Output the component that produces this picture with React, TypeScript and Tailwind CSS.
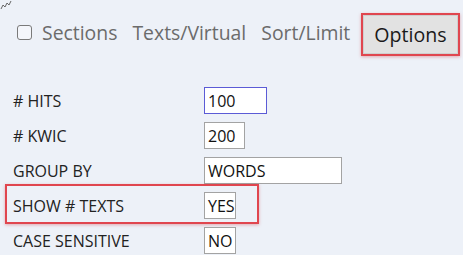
import React from 'react';

type Row = { label: string; value: string; width: string; focus?: boolean; marked?: boolean };

const rows: Row[] = [
  { label: '# HITS', value: '100', width: 'w-[63px]', focus: true },
  { label: '# KWIC', value: '200', width: 'w-[41px]' },
  { label: 'GROUP BY', value: 'WORDS', width: 'w-[138px]' },
  { label: 'SHOW # TEXTS', value: 'YES', width: 'w-[32px]', marked: true },
  { label: 'CASE SENSITIVE', value: 'NO', width: 'w-[32px]' },
];

export default function App() {
  return (
    <div
      className="relative w-[463px] h-[255px] overflow-hidden bg-[#edf1f8] text-[#222]"
      style={{ fontFamily: '"Open Sans", "Noto Sans", sans-serif' }}
    >
      {/* stray cursor mark in the corner */}
      <svg className="absolute left-0 top-0" width="12" height="10" viewBox="0 0 12 10">
        <polyline points="1,9 3,5 5,7 7,3 9,5 11,1" fill="none" stroke="#666" strokeWidth="1" />
      </svg>

      <div className="flex items-center pt-[13px] pl-[17px] h-[43px] box-content">
        <div className="flex items-center mb-[4px]">
          <span className="shrink-0 w-[15px] h-[15px] rounded-[3px] border border-[#7a7a7a] bg-white/40" />
          <span className="ml-[10px] text-[19.4px] leading-none text-[#6b6b6b]">Sections</span>
          <span className="ml-[15px] text-[19.4px] leading-none text-[#6b6b6b]">Texts/Virtual</span>
          <span className="ml-[15px] text-[19.4px] leading-none text-[#6b6b6b]">Sort/Limit</span>
        </div>
        <div className="ml-[11px] h-[43px] border-2 border-[#e0464f] shadow-[0_1px_3px_rgba(200,40,50,0.35)]">
          <div className="h-full px-[10px] flex items-center bg-[#e2e2e2] border border-[#cfcfcf] text-[19.6px] leading-none text-[#1a1a1a]">
            Options
          </div>
        </div>
      </div>

      <div className="mt-[31px] pl-[13px] flex flex-col gap-[8px]">
        {rows.map((r) => (
          <div key={r.label} className="relative flex items-center h-[27px]">
            {r.marked && (
              <div className="absolute -left-[8px] -top-[8px] w-[254px] h-[40px] border-2 border-[#e0464f] shadow-[0_1px_3px_rgba(200,40,50,0.35)]" />
            )}
            <span className="w-[191px] text-[16px] leading-none">{r.label}</span>
            <div
              className={`${r.width} h-[27px] bg-white flex items-center pl-[3px] text-[16px] leading-none text-[#111] ${
                r.focus ? 'border-[1.5px] border-[#5b5bd6]' : 'border border-[#a3a3a3]'
              }`}
            >
              {r.value}
            </div>
          </div>
        ))}
      </div>
    </div>
  );
}
